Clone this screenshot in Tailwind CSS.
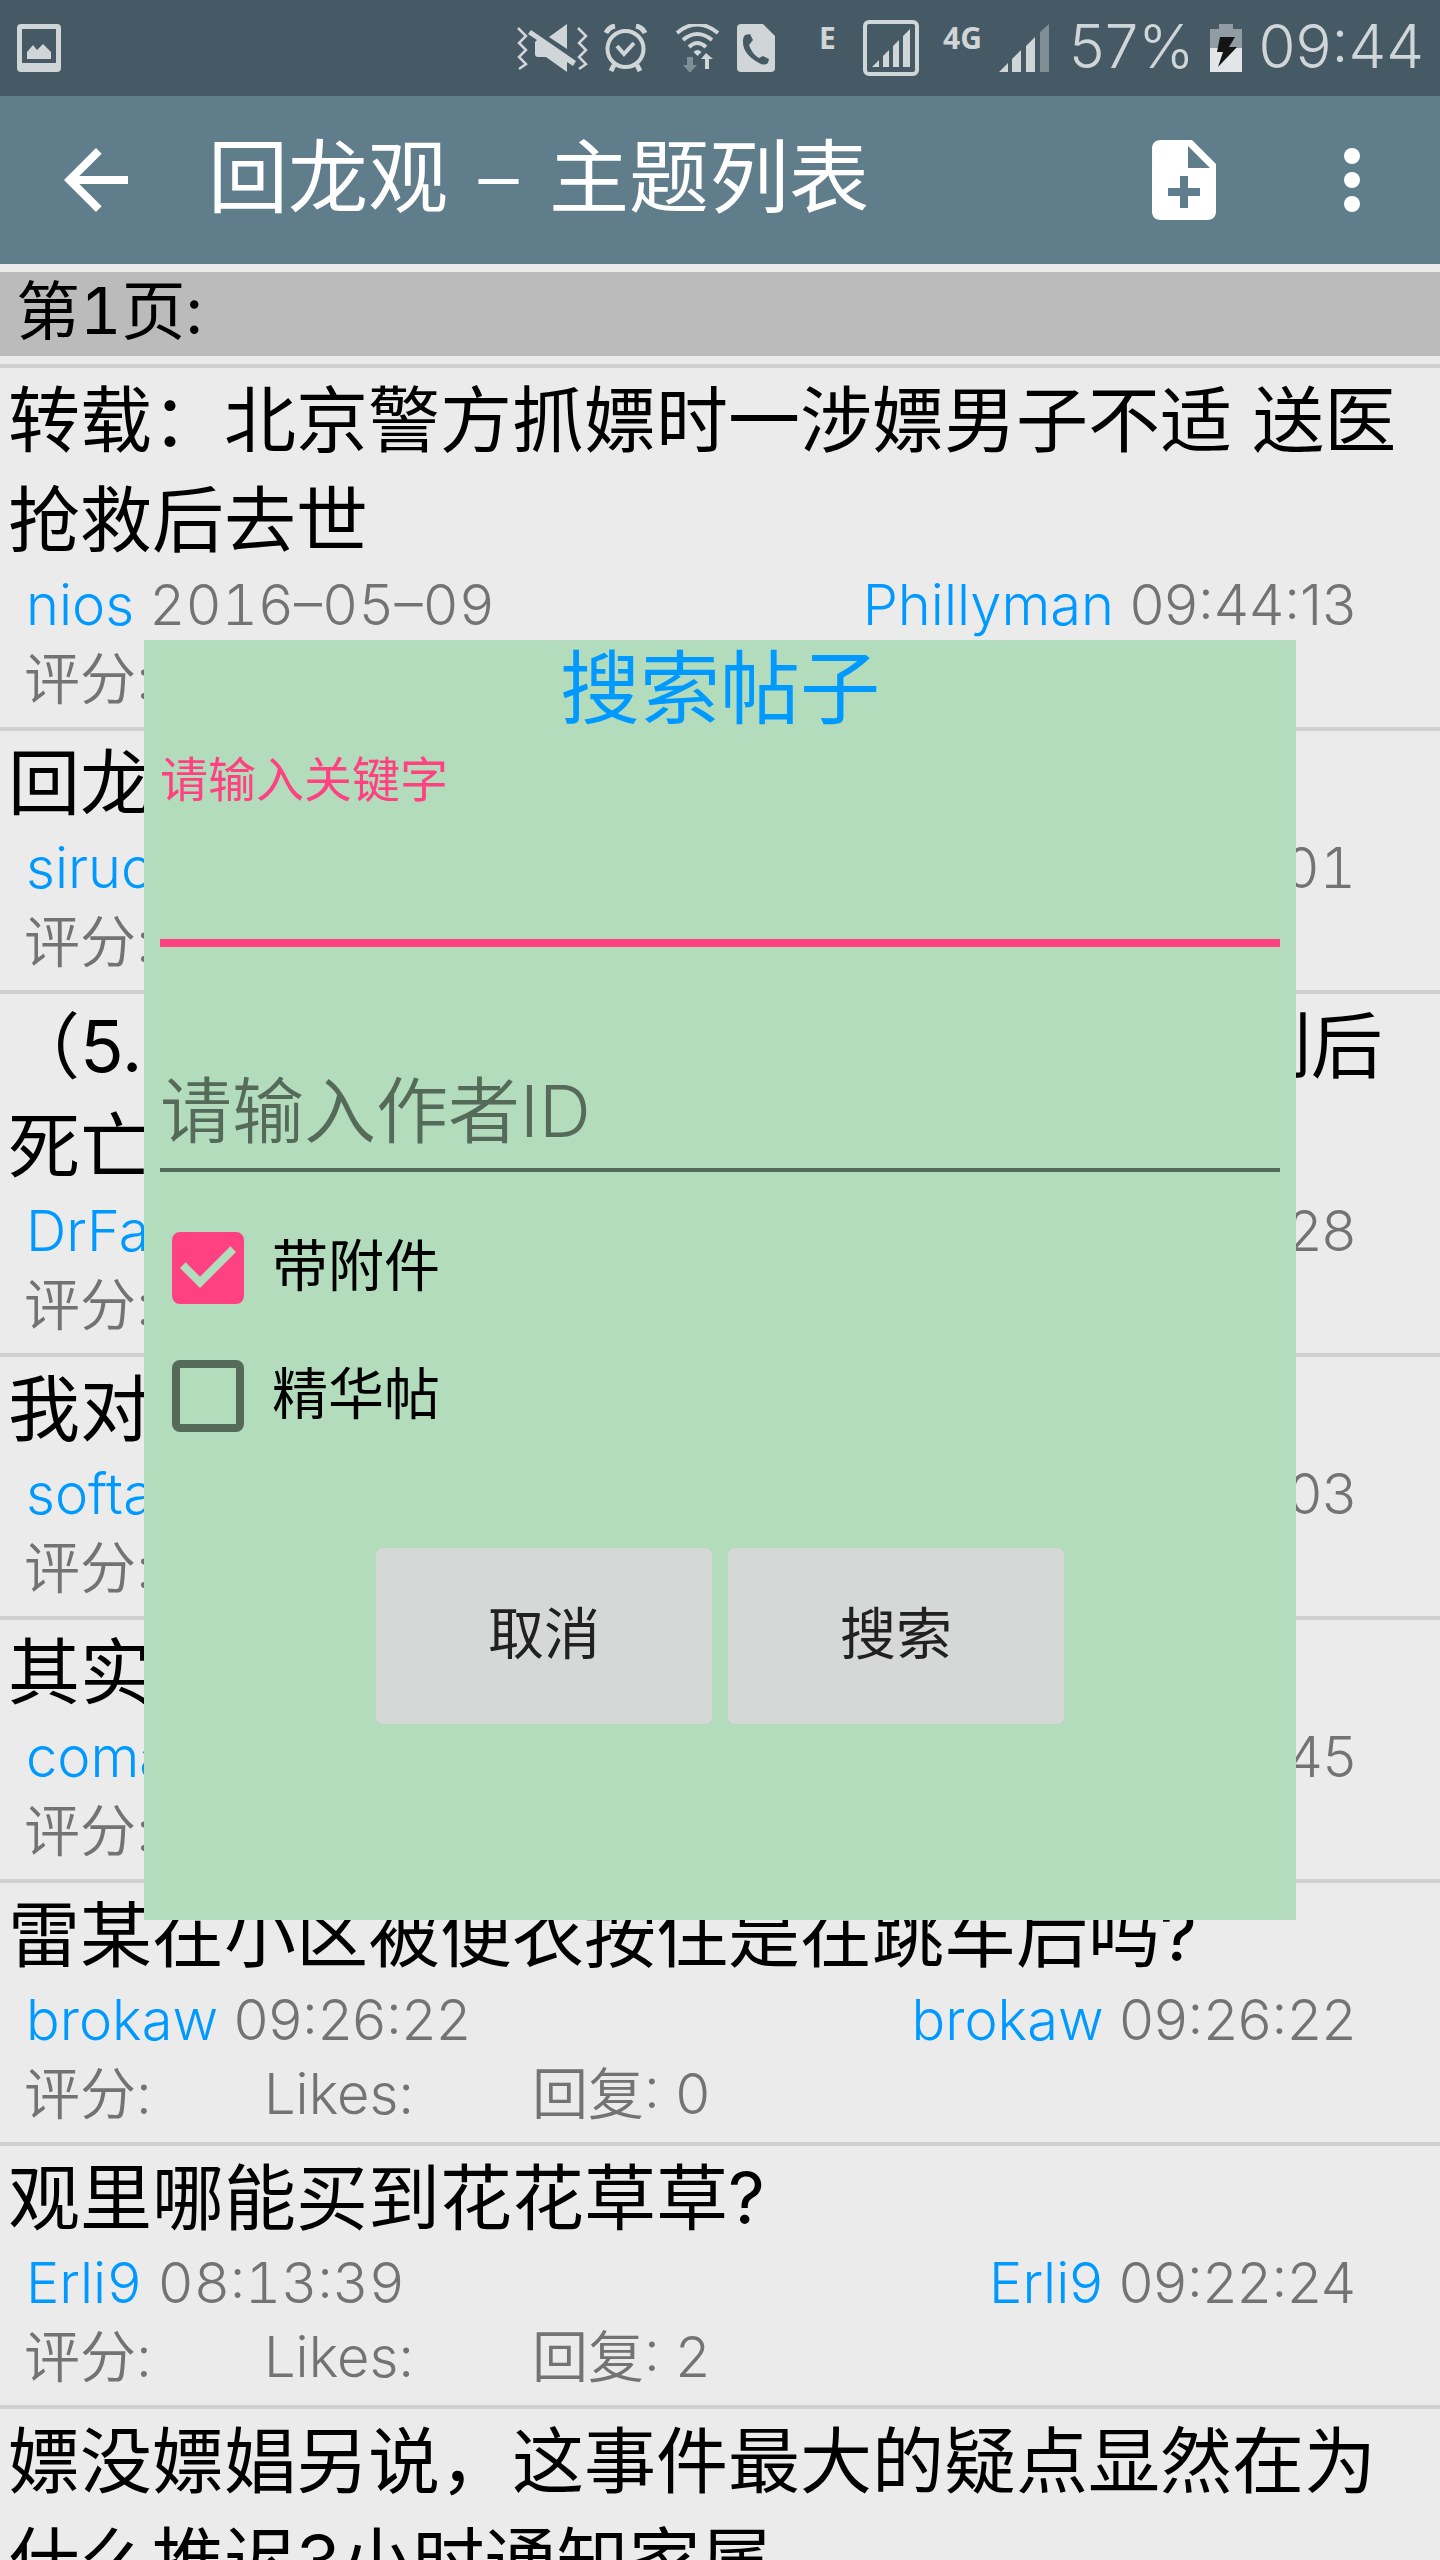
<!DOCTYPE html>
<html lang="zh-CN">
<head>
<meta charset="utf-8">
<meta name="viewport" content="width=device-width, initial-scale=1">
<title>回龙观 – 主题列表</title>
<script src="https://cdn.jsdelivr.net/npm/@tailwindcss/browser@4"></script>
</head>
<body class="bg-[#ebebeb] font-['Inter','Noto_Sans_CJK_SC',sans-serif] text-black">
<div class="flex h-screen flex-col overflow-hidden">

  <!-- Status bar -->
  <div class="flex h-24 shrink-0 items-center bg-[#455a64] pr-4 pl-4 text-[#d0d5d8]">
    <svg class="h-12 w-12" viewBox="0 0 48 48" fill="currentColor"><path fill-rule="evenodd" d="M5 0h36a4 4 0 0 1 4 4v40a4 4 0 0 1-4 4H5a4 4 0 0 1-4-4V4a4 4 0 0 1 4-4zM6 5v34h34V5z"/><path d="M11 35v-7l6-7 4 5 6-6 8 8v7z"/></svg>
    <svg class="ml-auto h-12 w-[72px]" viewBox="0 0 72 48" fill="currentColor"><path d="M2 4l8 8-7 7 7 7-7 7 7 7-7 5M62 4l8 8-7 7 7 7-7 7 7 7-7 5" fill="none" stroke="currentColor" stroke-width="2.5"/><path d="M51 0v25L33 13zM15 6l45 31-3 5-6-4v10L30 33h-8a3 3 0 0 1-3-3V18l2-2-9-6z"/></svg>
    <svg class="ml-4 h-12 w-11" viewBox="0 0 44 48" fill="none" stroke="currentColor"><circle cx="21.500" cy="25" r="18" stroke-width="4"/><path d="M13 22l7 8 10-11" stroke-width="4"/><path d="M2 9Q5 3 11 2M41 9Q38 3 32 2" stroke-width="5"/><path d="M10 41l-3 6M33 41l3 6" stroke-width="5"/></svg>
    <svg class="ml-7 h-12 w-11" viewBox="0 0 44 48" fill="none" stroke="currentColor" stroke-width="4"><path d="M1 9Q21 -8 42 9M7 16Q21 4 36 16M13 23Q21 15 30 23"/><path d="M21.500 32l-4-4q4-4 8 0z" fill="currentColor" stroke="none"/><path d="M29 45V35h-4l5-6 7 6h-4v10z" fill="currentColor" stroke="none"/><path d="M11 33h6v8h4l-7 8-7-8h4z" fill="#7f8e95" stroke="none"/></svg>
    <svg class="ml-4 h-12 w-10" viewBox="0 0 40 48"><path fill="currentColor" d="M5 0h22l12 12v32a4 4 0 0 1-4 4H5a4 4 0 0 1-4-4V4a4 4 0 0 1 4-4z"/><path fill="#455a64" d="M9 11l5-1 3 6-4 5q3 9 10 13l4-2 6 3-1 4q-4 3-9 0Q6 30 7 16q0-3 2-5z"/></svg>
    <span class="ml-[43px] w-5 pb-5 font-['Open_Sans'] text-3xl/9 font-bold">E</span>
    <svg class="ml-6 h-14 w-14" viewBox="0 0 56 56"><rect x="2" y="2" width="52" height="52" rx="4" fill="none" stroke="currentColor" stroke-width="4"/><path fill="currentColor" d="M9 47l7-7v7zM20 47V36l6-6v17zM30 47V26l6-6v27zM40 47V16l7-7v38z"/></svg>
    <span class="ml-6 w-10 pb-5 font-['Open_Sans'] text-3xl/9 font-bold">4G</span>
    <svg class="ml-4 h-12 w-[50px]" viewBox="0 0 50 48"><path fill="currentColor" d="M0 48l9-9v9zM13 48V35l9-9v22zM27 48V22l9-9v35z"/><path fill="#7f8e95" d="M41 48V8l9-8v48z"/></svg>
    <span class="ml-5 pb-1 text-6xl/none font-light">57%</span>
    <svg class="ml-4 h-12 w-8" viewBox="0 0 32 48"><path fill="#919da3" d="M9 0h14v5h9v19H0V5h9z"/><path fill="#e2e6e9" d="M0 24h32v24H0z"/><path fill="#151515" d="M10 13h15l-6 10h8L8 43l5-15H7z"/></svg>
    <span class="ml-4 pb-1 text-6xl/none font-light">09:44</span>
  </div>

  <!-- App bar -->
  <header class="flex h-[168px] shrink-0 items-center bg-[#607d8b] pr-10 pl-12 text-white">
    <button type="button" aria-label="返回"><svg class="size-24" viewBox="0 0 24 24" fill="currentColor"><path d="M20 11H7.830l5.590-5.590L12 4l-8 8 8 8 1.410-1.410L7.830 13H20z"/></svg></button>
    <h1 class="ml-16 flex-1 pb-1.5 text-[80px]/24">回龙观 <span class="px-2 font-light">–</span> 主题列表</h1>
    <button type="button" aria-label="新建"><svg class="size-24" viewBox="0 0 24 24" fill="currentColor"><path d="M14 2H6c-1.100 0-1.990.9-1.990 2L4 20c0 1.100.890 2 1.990 2H18c1.100 0 2-.9 2-2V8zm2 14h-3v3h-2v-3H8v-2h3v-3h2v3h3zm-3-7V3.500L18.500 9z"/></svg></button>
    <button type="button" aria-label="更多" class="ml-[72px]"><svg class="size-24" viewBox="0 0 24 24" fill="currentColor"><circle cx="12" cy="6" r="2"/><circle cx="12" cy="12" r="2"/><circle cx="12" cy="18" r="2"/></svg></button>
  </header>

  <main>
    <h2 class="my-2 h-[84px] bg-[#bbb] px-4 text-[64px]/[78px] tabular-nums">第1页:</h2>

    <ul>
      <li class="border-t-4 border-[#cfcfcf] pb-[11px]">
        <h3 class="-mb-0.5 px-2 pt-0.5 text-7xl/[100px]">转载：北京警方抓嫖时一涉嫖男子不适 送医抢救后去世</h3>
        <div class="flex justify-between pr-[84px] pl-[26px] text-[56px]/[74px] font-[350] text-[#737373]"><p class="tabular-nums"><a href="#" class="text-[#09f]">nios</a> 2016–05–09</p><p><a href="#" class="text-[#09f]">Phillyman</a> 09:44:13</p></div>
        <div class="flex pl-6 text-[56px]/[74px] font-[350] text-[#737373]"><span class="w-60">评分:</span><span class="w-[268px]">Likes:</span><span>回复: 0</span></div>
      </li>
      <li class="border-t-4 border-[#cfcfcf] pb-[11px]">
        <h3 class="-mb-0.5 px-2 pt-0.5 text-7xl/[100px]">回龙观</h3>
        <div class="flex justify-between pr-[84px] pl-[26px] text-[56px]/[74px] font-[350] text-[#737373]"><p><a href="#" class="text-[#09f]">siruo</a></p><p class="tabular-nums">09:43:01</p></div>
        <div class="flex pl-6 text-[56px]/[74px] font-[350] text-[#737373]"><span class="w-60">评分:</span><span class="w-[268px]">Likes:</span><span>回复: 0</span></div>
      </li>
      <li class="border-t-4 border-[#cfcfcf] pb-[11px]">
        <h3 class="-mb-0.5 px-2 pt-0.5 text-7xl/[100px]">（5.08）北京昌平区一男子因为涉嫖被制后死亡</h3>
        <div class="flex justify-between pr-[84px] pl-[26px] text-[56px]/[74px] font-[350] text-[#737373]"><p><a href="#" class="text-[#09f]">DrFa</a></p><p>09:42:28</p></div>
        <div class="flex pl-6 text-[56px]/[74px] font-[350] text-[#737373]"><span class="w-60">评分:</span><span class="w-[268px]">Likes:</span><span>回复: 0</span></div>
      </li>
      <li class="border-t-4 border-[#cfcfcf] pb-[11px]">
        <h3 class="-mb-0.5 px-2 pt-0.5 text-7xl/[100px]">我对</h3>
        <div class="flex justify-between pr-[84px] pl-[26px] text-[56px]/[74px] font-[350] text-[#737373]"><p><a href="#" class="text-[#09f]">softa</a></p><p>09:40:03</p></div>
        <div class="flex pl-6 text-[56px]/[74px] font-[350] text-[#737373]"><span class="w-60">评分:</span><span class="w-[268px]">Likes:</span><span>回复: 0</span></div>
      </li>
      <li class="border-t-4 border-[#cfcfcf] pb-[11px]">
        <h3 class="-mb-0.5 px-2 pt-0.5 text-7xl/[100px]">其实</h3>
        <div class="flex justify-between pr-[84px] pl-[26px] text-[56px]/[74px] font-[350] text-[#737373]"><p><a href="#" class="text-[#09f]">coma</a></p><p>09:35:45</p></div>
        <div class="flex pl-6 text-[56px]/[74px] font-[350] text-[#737373]"><span class="w-60">评分:</span><span class="w-[268px]">Likes:</span><span>回复: 0</span></div>
      </li>
      <li class="border-t-4 border-[#cfcfcf] pb-[11px]">
        <h3 class="-mb-0.5 px-2 pt-0.5 text-7xl/[100px]">雷某在小区被便衣按住是在跳车后吗?</h3>
        <div class="flex justify-between pr-[84px] pl-[26px] text-[56px]/[74px] font-[350] text-[#737373]"><p><a href="#" class="text-[#09f]">brokaw</a> 09:26:22</p><p><a href="#" class="text-[#09f]">brokaw</a> 09:26:22</p></div>
        <div class="flex pl-6 text-[56px]/[74px] font-[350] text-[#737373]"><span class="w-60">评分:</span><span class="w-[268px]">Likes:</span><span>回复: 0</span></div>
      </li>
      <li class="border-t-4 border-[#cfcfcf] pb-[11px]">
        <h3 class="-mb-0.5 px-2 pt-0.5 text-7xl/[100px]">观里哪能买到花花草草?</h3>
        <div class="flex justify-between pr-[84px] pl-[26px] text-[56px]/[74px] font-[350] text-[#737373]"><p class="tabular-nums"><a href="#" class="text-[#09f]">Erli9</a> 08:13:39</p><p><a href="#" class="text-[#09f]">Erli9</a> 09:22:24</p></div>
        <div class="flex pl-6 text-[56px]/[74px] font-[350] text-[#737373]"><span class="w-60">评分:</span><span class="w-[268px]">Likes:</span><span>回复: 2</span></div>
      </li>
      <li class="border-t-4 border-[#cfcfcf] pb-[11px]">
        <h3 class="-mb-0.5 px-2 pt-0.5 text-7xl/[100px]">嫖没嫖娼另说，这事件最大的疑点显然在为什么推迟3小时通知家属</h3>
      </li>
    </ul>
  </main>
</div>

<!-- Search dialog -->
<div class="fixed inset-0 flex items-center justify-center">
  <form role="dialog" aria-labelledby="dialog-title" class="flex h-1/2 w-4/5 flex-col bg-[#b2dcbc] px-4">
    <h2 id="dialog-title" class="text-center text-[80px]/24 text-[#09f]">搜索帖子</h2>
    <label for="keyword" class="mt-2 text-5xl/[72px] text-[#ff4081]">请输入关键字</label>
    <input id="keyword" type="text" class="h-[131px] w-full border-b-8 border-[#ff4081] text-7xl outline-none">
    <input id="author" type="text" aria-label="作者ID" placeholder="请输入作者ID" class="mt-[105px] h-[120px] w-full border-b-4 border-[#556a58] text-7xl font-[350] outline-none placeholder:text-[#556a58]">
    <div class="mt-[60px] flex flex-col gap-14 pl-3">
      <label class="flex h-[72px] items-center gap-7 text-[56px]/[72px]">
        <span class="grid size-[72px] shrink-0">
          <input type="checkbox" checked class="col-start-1 row-start-1 size-[72px] appearance-none rounded-lg border-8 border-[#556a58] checked:border-[#ff4081] checked:bg-[#ff4081]">
          <svg class="pointer-events-none col-start-1 row-start-1 size-[72px]" viewBox="3 3 18 18" fill="#b2dcbc"><path d="M10 17l-5-5 1.410-1.410L10 14.170l7.590-7.590L19 8z"/></svg>
        </span>
        <span class="pb-1">带附件</span>
      </label>
      <label class="flex h-[72px] items-center gap-7 text-[56px]/[72px]">
        <input type="checkbox" class="size-[72px] shrink-0 appearance-none rounded-lg border-8 border-[#556a58] checked:border-[#ff4081] checked:bg-[#ff4081]">
        <span class="pb-1">精华帖</span>
      </label>
    </div>
    <div class="mt-[116px] flex justify-center gap-4 text-[56px]/[72px] text-[#212121]">
      <button type="button" class="h-44 w-[336px] rounded-lg bg-[#d6d7d7] pb-1">取消</button>
      <button type="submit" class="h-44 w-[336px] rounded-lg bg-[#d6d7d7] pb-1">搜索</button>
    </div>
  </form>
</div>
</body>
</html>
